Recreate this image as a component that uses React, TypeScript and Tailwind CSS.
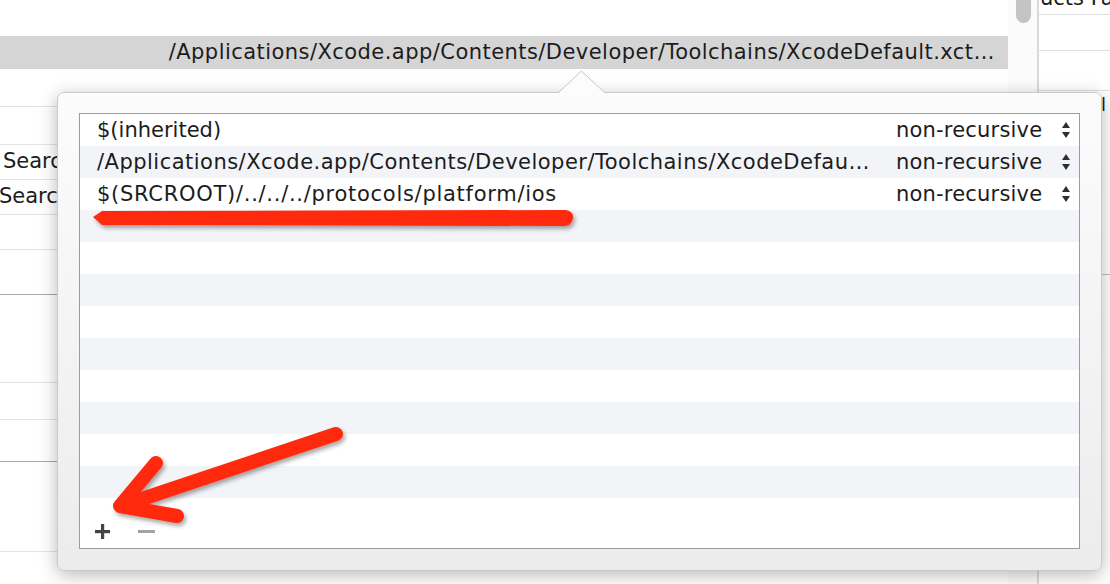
import React from "react";

const FONT = { fontFamily: '"DejaVu Sans", "Liberation Sans", sans-serif' };

function Stepper() {
  return (
    <svg width="10" height="18" viewBox="0 0 10 18" className="block">
      <path d="M5 1 L9 7 L1 7 Z" fill="#2e2e2e" />
      <path d="M1 11 L9 11 L5 17 Z" fill="#2e2e2e" />
    </svg>
  );
}

const rows: { t: string; track: string }[] = [
  { t: "$(inherited)", track: "tracking-[0px]" },
  { t: "/Applications/Xcode.app/Contents/Developer/Toolchains/XcodeDefau\u2026", track: "tracking-[0.48px]" },
  { t: "$(SRCROOT)/../../../protocols/platform/ios", track: "tracking-[0.72px]" },
];

function TableRow({ row, i }: { row?: { t: string; track: string }; i: number }) {
  return (
    <div
      className={`flex h-[32px] shrink-0 items-center ${i % 2 === 1 ? "bg-[#f3f4f8]" : "bg-white"}`}
    >
      {row !== undefined && (
        <>
          <div className={`flex-1 truncate pl-[17px] text-[21px] leading-[32px] text-[#1c1c1c] ${row.track}`}>{row.t}</div>
          <div className="flex w-[183px] items-center justify-between pr-[8px]">
            <span className="text-[21px] leading-[32px] tracking-[0.2px] text-[#1c1c1c]">non-recursive</span>
            <Stepper />
          </div>
        </>
      )}
    </div>
  );
}

export default function App() {
  const bgRows: { h: number; text?: string; ml?: string; dark?: boolean }[] = [
    { h: 38 },
    { h: 38 },
    { h: 35, text: "Search", ml: "ml-[3px]" },
    { h: 35, text: "Search", ml: "-ml-[1px]" },
    { h: 35 },
    { h: 45, dark: true },
    { h: 88 },
    { h: 37 },
    { h: 42, dark: true },
    { h: 90 },
    { h: 40 },
  ];

  return (
    <div className="relative h-[584px] w-[1110px] overflow-hidden bg-white" style={FONT}>
      {/* Background window */}
      <div className="flex h-full w-full">
        {/* main column */}
        <div className="flex w-[1008px] flex-col">
          <div className="h-[36px] shrink-0 bg-white" />
          <div className="flex h-[33px] shrink-0 items-center justify-end bg-[#d5d5d5] pr-[13px]">
            <span className="text-[21px] tracking-[0.45px] text-[#1c1c1c]">
              /Applications/Xcode.app/Contents/Developer/Toolchains/XcodeDefault.xct{"\u2026"}
            </span>
          </div>
          {bgRows.map((r, i) => (
            <div
              key={i}
              style={{ height: r.h }}
              className={`flex shrink-0 items-center border-b ${r.dark ? "border-[#a8a8a8]" : "border-[#e2e2e2]"}`}
            >
              {r.text && (
                <div className="w-[57px] overflow-hidden">
                  <div className={`${r.ml} whitespace-nowrap text-[21px] text-[#1c1c1c]`}>{r.text}</div>
                </div>
              )}
            </div>
          ))}
        </div>
        {/* scroller */}
        <div className="relative w-[31px] shrink-0 border-r-2 border-[#dadada] bg-[#fbfbfb]">
          <div className="ml-[8px] h-[23px] w-[15px] rounded-b-[8px] bg-[#c4c4c4]" />
        </div>
        {/* right panel */}
        <div className="flex flex-1 flex-col overflow-hidden">
          <div className="h-[15px] shrink-0 overflow-hidden border-b border-[#e0e0e0]">
            <div className="-mt-[14px] whitespace-nowrap pl-[1px] text-[21px] leading-[24px] text-[#1c1c1c]">ucts Fa</div>
          </div>
          <div className="h-[36px] shrink-0 border-b border-[#e0e0e0]" />
          <div className="h-[40px] shrink-0 border-b border-[#e0e0e0]" />
          <div className="flex h-[26px] shrink-0 items-center justify-end pr-[4px]">
            <span className="text-[18px] text-[#1c1c1c]">l</span>
          </div>
          <div className="h-[158px] shrink-0 border-b border-[#bdbdbd]" />
        </div>
      </div>

      {/* Popover */}
      <div className="absolute left-[57px] top-[92px] flex h-[479px] w-[1045px] flex-col rounded-[7px] border border-[#cacaca] bg-gradient-to-b from-[#fcfcfc] to-[#ececec] px-[21px] pb-[21px] pt-[20px] shadow-[0_4px_18px_rgba(0,0,0,0.28)]">
        {/* pointer */}
        <svg
          className="absolute left-[500px] top-[-23px]"
          width="47"
          height="24"
          viewBox="0 0 47 24"
        >
          <path d="M0 23 L23.5 1 L47 23" fill="#fcfcfc" stroke="#c4c4c4" strokeWidth="1" />
          <rect x="0" y="23" width="47" height="1" fill="#fcfcfc" />
        </svg>
        <div className="flex flex-1 flex-col overflow-hidden border border-[#9c9c9c] bg-white">
          {Array.from({ length: 12 }).map((_, i) => (
            <TableRow key={i} i={i} row={rows[i]} />
          ))}
          <div className="flex flex-1 items-end gap-[27px] bg-white pb-[8px] pl-[14px]">
            <svg width="17" height="17" viewBox="0 0 17 17">
              <rect x="7" y="1" width="3.2" height="15" fill="#444" />
              <rect x="1" y="7" width="15" height="3.2" fill="#444" />
            </svg>
            <svg width="17" height="17" viewBox="0 0 17 17">
              <rect x="0" y="7" width="17" height="3" fill="#a3a3a3" />
            </svg>
          </div>
        </div>
      </div>

      {/* Red annotations */}
      <svg className="pointer-events-none absolute left-0 top-0" width="1110" height="584" viewBox="0 0 1110 584">
        <defs>
          <filter id="sh" x="-10%" y="-50%" width="120%" height="200%">
            <feDropShadow dx="2" dy="3" stdDeviation="2" floodColor="#000" floodOpacity="0.35" />
          </filter>
        </defs>
        <g filter="url(#sh)" fill="#ff2a0a" stroke="#ff2a0a">
          <path
            d="M93 217 L102 211 L566 210 Q574 212 573 218 Q572 225 565 226 L102 225 Z"
            stroke="none"
          />
          <g fill="none" strokeWidth="14" strokeLinecap="round" strokeLinejoin="round">
            <path d="M336 434 L124 505" />
            <path d="M156 463 L120 506 L177 516" />
          </g>
        </g>
      </svg>
    </div>
  );
}
